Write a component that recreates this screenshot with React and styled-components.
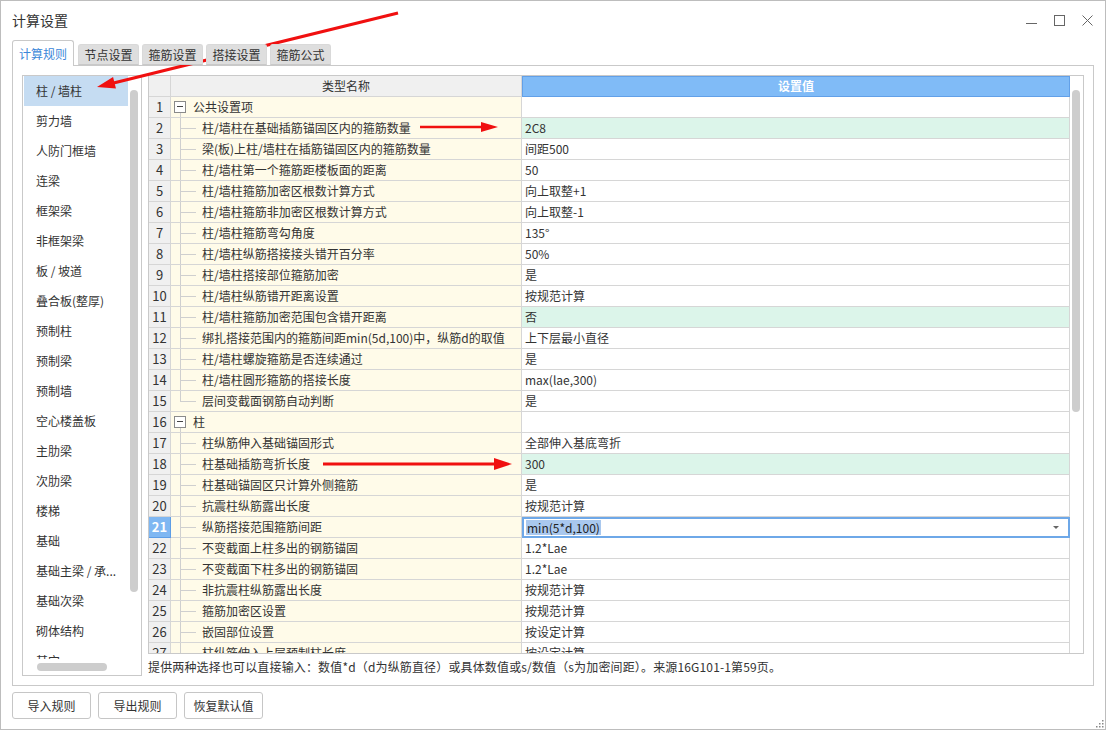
import React from 'react'
import styled, { createGlobalStyle } from 'styled-components'

const GlobalStyle = createGlobalStyle`
  html, body { margin: 0; padding: 0; background: #fff; }
  body {
    font-family: "Noto Sans CJK SC", "Noto Sans", sans-serif;
    font-size: 12px;
    color: #333;
  }
  * { box-sizing: border-box; }
`

const sideItems = [
  '柱 / 墙柱', '剪力墙', '人防门框墙', '连梁', '框架梁', '非框架梁', '板 / 坡道',
  '叠合板(整厚)', '预制柱', '预制梁', '预制墙', '空心楼盖板', '主肋梁', '次肋梁',
  '楼梯', '基础', '基础主梁 / 承...', '基础次梁', '砌体结构', '其它',
]

const rows = [
  { name: '公共设置项', group: true },
  { name: '柱/墙柱在基础插筋锚固区内的箍筋数量', value: '2C8', hl: true },
  { name: '梁(板)上柱/墙柱在插筋锚固区内的箍筋数量', value: '间距500' },
  { name: '柱/墙柱第一个箍筋距楼板面的距离', value: '50' },
  { name: '柱/墙柱箍筋加密区根数计算方式', value: '向上取整+1' },
  { name: '柱/墙柱箍筋非加密区根数计算方式', value: '向上取整-1' },
  { name: '柱/墙柱箍筋弯勾角度', value: '135°' },
  { name: '柱/墙柱纵筋搭接接头错开百分率', value: '50%' },
  { name: '柱/墙柱搭接部位箍筋加密', value: '是' },
  { name: '柱/墙柱纵筋错开距离设置', value: '按规范计算' },
  { name: '柱/墙柱箍筋加密范围包含错开距离', value: '否', hl: true },
  { name: '绑扎搭接范围内的箍筋间距min(5d,100)中，纵筋d的取值', value: '上下层最小直径' },
  { name: '柱/墙柱螺旋箍筋是否连续通过', value: '是' },
  { name: '柱/墙柱圆形箍筋的搭接长度', value: 'max(lae,300)' },
  { name: '层间变截面钢筋自动判断', value: '是', last: true },
  { name: '柱', group: true },
  { name: '柱纵筋伸入基础锚固形式', value: '全部伸入基底弯折' },
  { name: '柱基础插筋弯折长度', value: '300', hl: true },
  { name: '柱基础锚固区只计算外侧箍筋', value: '是' },
  { name: '抗震柱纵筋露出长度', value: '按规范计算' },
  { name: '纵筋搭接范围箍筋间距', value: 'min(5*d,100)', editing: true },
  { name: '不变截面上柱多出的钢筋锚固', value: '1.2*Lae' },
  { name: '不变截面下柱多出的钢筋锚固', value: '1.2*Lae' },
  { name: '非抗震柱纵筋露出长度', value: '按规范计算' },
  { name: '箍筋加密区设置', value: '按规范计算' },
  { name: '嵌固部位设置', value: '按设定计算' },
  { name: '柱纵筋伸入上层预制柱长度', value: '按设定计算' },
]

const tabs = ['计算规则', '节点设置', '箍筋设置', '搭接设置', '箍筋公式']

const Stage = styled.div`
  position: relative;
  width: 1106px;
  height: 730px;
  overflow: hidden;
`

const Window = styled.div`
  width: 1106px;
  height: 730px;
  border: 1px solid #bdbdbd;
  background: #fff;
  display: flex;
  flex-direction: column;
`

const TitleBar = styled.div`
  height: 39px;
  flex-shrink: 0;
  display: flex;
  align-items: center;
  justify-content: space-between;
  padding: 0 12px 1px 11px;
`

const Title = styled.div`
  font-size: 14px;
  color: #333;
`

const Controls = styled.div`
  display: flex;
  align-items: center;
  gap: 17px;
  svg { display: block; }
`

const TabStrip = styled.div`
  height: 25px;
  flex-shrink: 0;
  display: flex;
  align-items: flex-end;
  gap: 3px;
  padding-left: 11px;
  position: relative;
  z-index: 1;
`

const Tab = styled.div`
  height: ${p => (p.$active ? 26 : 21)}px;
  width: ${p => (p.$active ? 62 : 61)}px;
  margin-bottom: ${p => (p.$active ? -1 : 0)}px;
  margin-right: ${p => (p.$active ? 1 : 0)}px;
  border: 1px solid ${p => (p.$active ? '#c9c9c9' : '#d9d9d9')};
  border-bottom: ${p => (p.$active ? 'none' : '1px solid #c9c9c9')};
  border-radius: 3px 3px 0 0;
  background: ${p => (p.$active ? '#fff' : '#dedede')};
  color: ${p => (p.$active ? '#3b87d9' : '#333')};
  font-size: 12px;
  display: flex;
  align-items: center;
  justify-content: center;
  padding-bottom: 1px;
`

const Panel = styled.div`
  height: 621px;
  flex-shrink: 0;
  margin: 0 11px;
  border: 1px solid #c9c9c9;
  padding: 9px;
  display: flex;
  gap: 6px;
`

const Sidebar = styled.div`
  width: 120px;
  height: 601px;
  border: 1px solid #c9c9c9;
  display: flex;
  flex-direction: column;
`

const SideTop = styled.div`
  flex: 1;
  min-height: 0;
  display: flex;
`

const List = styled.div`
  flex: 1;
  overflow: hidden;
  padding-left: 1px;
`

const Item = styled.div`
  height: 30px;
  line-height: 29px;
  padding-left: 12px;
  white-space: nowrap;
  font-size: 12px;
  color: #333;
  background: ${p => (p.$selected ? '#c5dcf2' : 'transparent')};
`

const VTrack = styled.div`
  width: 13px;
  padding: ${p => p.$top}px 0 0 2px;
`

const VThumb = styled.div`
  width: 8px;
  height: ${p => p.$h}px;
  border-radius: 4px;
  background: #cdcdcd;
`

const HTrack = styled.div`
  height: 16px;
  padding: 4px 0 0 14px;
`

const HThumb = styled.div`
  width: 70px;
  height: 8px;
  border-radius: 4px;
  background: #cdcdcd;
`

const Main = styled.div`
  flex: 1;
  display: flex;
  flex-direction: column;
`

const Grid = styled.div`
  height: 579px;
  border: 1px solid #c9c9c9;
  display: flex;
`

const Table = styled.div`
  width: 921px;
  overflow: hidden;
`

const Row = styled.div`
  display: flex;
  height: 21px;
`

const NumCell = styled.div`
  width: 22px;
  flex-shrink: 0;
  border-right: 1px solid ${p => (p.$active ? '#5d9de6' : '#d6d6d6')};
  border-bottom: 1px solid ${p => (p.$active ? '#5d9de6' : '#d6d6d6')};
  background: ${p => (p.$active ? '#7fb7f2' : '#f0f0f0')};
  color: ${p => (p.$active ? '#fff' : '#333')};
  font-weight: ${p => (p.$active ? 700 : 400)};
  font-size: 13px;
  line-height: 19px;
  text-align: center;
`

const NameCell = styled.div`
  width: 351px;
  flex-shrink: 0;
  border-right: 1px solid #d6d6d6;
  border-bottom: 1px solid #d6d6d6;
  background: #fffbe9;
  display: flex;
  align-items: center;
  white-space: nowrap;
  overflow: hidden;
  padding-left: ${p => (p.$group ? 3 : 9)}px;
  padding-bottom: 1px;
`

const ValueCell = styled.div`
  flex: 1;
  border-right: 1px solid #d6d6d6;
  border-bottom: 1px solid #d6d6d6;
  background: ${p => (p.$hl ? '#dcf5ea' : '#fff')};
  padding: 0 0 1px 3px;
  display: flex;
  align-items: center;
  white-space: nowrap;
  color: #333;
`

const Editor = styled.div`
  flex: 1;
  border: 2px solid #6ea8e8;
  background: #fff;
  padding: 0 0 1px 2px;
  display: flex;
  align-items: center;
  justify-content: space-between;
`

const Selected = styled.span`
  background: #a9c8ee;
  color: #222;
  line-height: 15px;
  padding: 0 1px;
`

const DropArrow = styled.span`
  width: 0;
  height: 0;
  margin-right: 9px;
  border-left: 3px solid transparent;
  border-right: 3px solid transparent;
  border-top: 3px solid #666;
`

const HeadNum = styled.div`
  width: 22px;
  border-right: 1px solid #d6d6d6;
  border-bottom: 1px solid #d6d6d6;
  background: #f0f0f0;
`

const HeadName = styled.div`
  width: 351px;
  border-right: 1px solid #d6d6d6;
  border-bottom: 1px solid #d6d6d6;
  background: #f0f0f0;
  text-align: center;
  line-height: 19px;
  color: #333;
`

const HeadValue = styled.div`
  flex: 1;
  border: 1px solid #62a0e8;
  background: #80bbf7;
  color: #fff;
  font-weight: 700;
  text-align: center;
  line-height: 17px;
`

const Toggle = styled.span`
  position: relative;
  width: 12px;
  height: 12px;
  margin-right: 7px;
  border: 1px solid #8a8a8a;
  background: #fff;
  display: flex;
  align-items: center;
  justify-content: center;
  flex-shrink: 0;
  &::before {
    content: '';
    width: 6px;
    height: 1px;
    background: #444;
  }
  &::after {
    content: '';
    position: absolute;
    left: 5px;
    top: 11px;
    height: 6px;
    width: 1px;
    background: #cfcfcf;
  }
`

const Branch = styled.span`
  position: relative;
  align-self: stretch;
  width: 22px;
  flex-shrink: 0;
  &::before {
    content: '';
    position: absolute;
    left: 0;
    top: -1px;
    width: 1px;
    height: ${p => (p.$last ? '11px' : '22px')};
    background: #cfcfcf;
  }
  &::after {
    content: '';
    position: absolute;
    left: 0;
    top: 10px;
    width: 16px;
    height: 1px;
    background: #cfcfcf;
  }
`

const ScrollCol = styled.div`
  width: 13px;
  padding: 14px 0 0 2px;
`

const Hint = styled.div`
  padding-top: 4px;
  line-height: 18px;
  font-size: 12px;
  letter-spacing: 0.15px;
  color: #333;
  white-space: nowrap;
`

const ButtonRow = styled.div`
  display: flex;
  gap: 7px;
  padding: 6px 11px 0;
`

const Button = styled.button`
  width: ${p => p.$w || 79}px;
  height: 27px;
  border: 1px solid #c6c6c6;
  border-radius: 3px;
  background: #fff;
  font-family: "Noto Sans CJK SC", "Noto Sans", sans-serif;
  font-size: 12px;
  color: #333;
  padding: 0 0 1px;
`

const Overlay = styled.svg`
  position: absolute;
  left: 0;
  top: 0;
  pointer-events: none;
`

const Grip = styled.svg`
  position: absolute;
  right: 2px;
  bottom: 2px;
`

function Arrow({ x1, y1, x2, y2, head = 17, half = 6, w = 3 }) {
  const dx = x2 - x1
  const dy = y2 - y1
  const len = Math.hypot(dx, dy)
  const ux = dx / len
  const uy = dy / len
  const bx = x2 - ux * head
  const by = y2 - uy * head
  const px = -uy
  const py = ux
  const pts = `${x2},${y2} ${bx + px * half},${by + py * half} ${bx - px * half},${by - py * half}`
  return (
    <g>
      <line x1={x1} y1={y1} x2={bx + ux * 2} y2={by + uy * 2} stroke="#f01010" strokeWidth={w} />
      <polygon points={pts} fill="#f01010" />
    </g>
  )
}

export default function App() {
  return (
    <Stage>
      <GlobalStyle />
      <Window>
        <TitleBar>
          <Title>计算设置</Title>
          <Controls>
            <svg width="11" height="11"><line x1="0" y1="8.5" x2="11" y2="8.5" stroke="#666" /></svg>
            <svg width="11" height="11"><rect x="0.5" y="0.5" width="10" height="10" fill="none" stroke="#666" /></svg>
            <svg width="11" height="11">
              <line x1="0.5" y1="0.5" x2="10.5" y2="10.5" stroke="#666" />
              <line x1="10.5" y1="0.5" x2="0.5" y2="10.5" stroke="#666" />
            </svg>
          </Controls>
        </TitleBar>

        <TabStrip>
          {tabs.map((t, i) => (
            <Tab key={t} $active={i === 0}>{t}</Tab>
          ))}
        </TabStrip>

        <Panel>
          <Sidebar>
            <SideTop>
              <List>
                {sideItems.map((s, i) => (
                  <Item key={s} $selected={i === 0}>{s}</Item>
                ))}
              </List>
              <VTrack $top={14}>
                <VThumb $h={502} />
              </VTrack>
            </SideTop>
            <HTrack>
              <HThumb />
            </HTrack>
          </Sidebar>

          <Main>
            <Grid>
              <Table>
                <Row>
                  <HeadNum />
                  <HeadName>类型名称</HeadName>
                  <HeadValue>设置值</HeadValue>
                </Row>
                {rows.map((r, i) => (
                  <Row key={i}>
                    <NumCell $active={r.editing}>{i + 1}</NumCell>
                    <NameCell $group={r.group}>
                      {r.group ? <Toggle /> : <Branch $last={r.last} />}
                      {r.name}
                    </NameCell>
                    {r.editing ? (
                      <Editor>
                        <Selected>{r.value}</Selected>
                        <DropArrow />
                      </Editor>
                    ) : (
                      <ValueCell $hl={r.hl}>{r.value}</ValueCell>
                    )}
                  </Row>
                ))}
              </Table>
              <ScrollCol>
                <VThumb $h={322} />
              </ScrollCol>
            </Grid>
            <Hint>提供两种选择也可以直接输入：数值*d（d为纵筋直径）或具体数值或s/数值（s为加密间距）。来源16G101-1第59页。</Hint>
          </Main>
        </Panel>

        <ButtonRow>
          <Button>导入规则</Button>
          <Button>导出规则</Button>
          <Button>恢复默认值</Button>
        </ButtonRow>
      </Window>

      <Grip width="9" height="9">
        {[[7, 1], [4, 4], [7, 4], [1, 7], [4, 7], [7, 7]].map(([x, y]) => (
          <rect key={`${x}-${y}`} x={x} y={y} width="1.5" height="1.5" fill="#888" />
        ))}
      </Grip>

      <Overlay width="1106" height="730">
        <Arrow x1={398} y1={13} x2={97} y2={87} head={18} half={6} w={3} />
        <Arrow x1={420} y1={127} x2={498} y2={127} head={17} half={5} w={2.5} />
        <Arrow x1={323} y1={464} x2={512} y2={464} head={18} half={6} w={3} />
      </Overlay>
    </Stage>
  )
}
